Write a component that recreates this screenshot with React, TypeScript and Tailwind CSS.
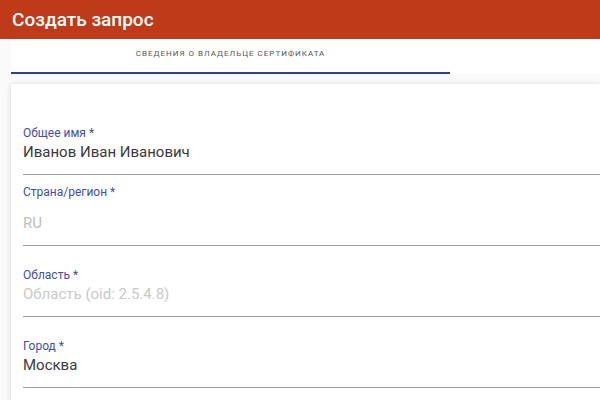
import React from "react";

type FieldProps = {
  label: string;
  value: string;
  muted?: "none" | "ru" | "ph";
  select?: boolean;
};

function Field({ label, value, muted = "none", select = false }: FieldProps) {
  const valueColor =
    muted === "ru" ? "text-[#bdbdbd]" : muted === "ph" ? "text-[#c9c9c9]" : "text-[#3a3a3a]";
  return (
    <div className={`border-b border-[#9e9e9e] pb-[12px] ${select ? "pt-[10px]" : "pt-[22px]"}`}>
      <div className="text-[12px] leading-[14px] text-[#3f4fa8]">{label}</div>
      <div className={`${select ? "mt-[14px]" : "mt-[2px]"} text-[15px] leading-[20px] ${valueColor}`}>
        {value}
      </div>
    </div>
  );
}

export default function App() {
  return (
    <div className="w-[600px] h-[400px] overflow-hidden bg-[#fafafa] font-['Roboto',sans-serif]">
      <div className="h-[39px] bg-[#bf3a19] flex items-center pl-[12px]">
        <span className="text-white text-[19px] font-medium leading-none">Создать запрос</span>
      </div>
      <div className="ml-[11px] bg-white h-[35px] flex">
        <div className="w-[439px] h-full flex flex-col">
          <div className="flex-1 flex items-center justify-center pb-[3px]">
            <span className="text-[8px] tracking-[1px] uppercase text-[#555555] font-normal">
              Сведения о владельце сертификата
            </span>
          </div>
          <div className="h-[2px] bg-[#2f3f93]" />
        </div>
      </div>
      <div className="ml-[11px] mt-[10px] bg-white shadow-[0_1px_5px_rgba(0,0,0,0.18)] pl-[12px] pt-[20px] pb-[20px]">
        <Field label="Общее имя *" value="Иванов Иван Иванович" />
        <Field label="Страна/регион *" value="RU" muted="ru" select />
        <Field label="Область *" value="Область (oid: 2.5.4.8)" muted="ph" />
        <Field label="Город *" value="Москва" />
      </div>
    </div>
  );
}
